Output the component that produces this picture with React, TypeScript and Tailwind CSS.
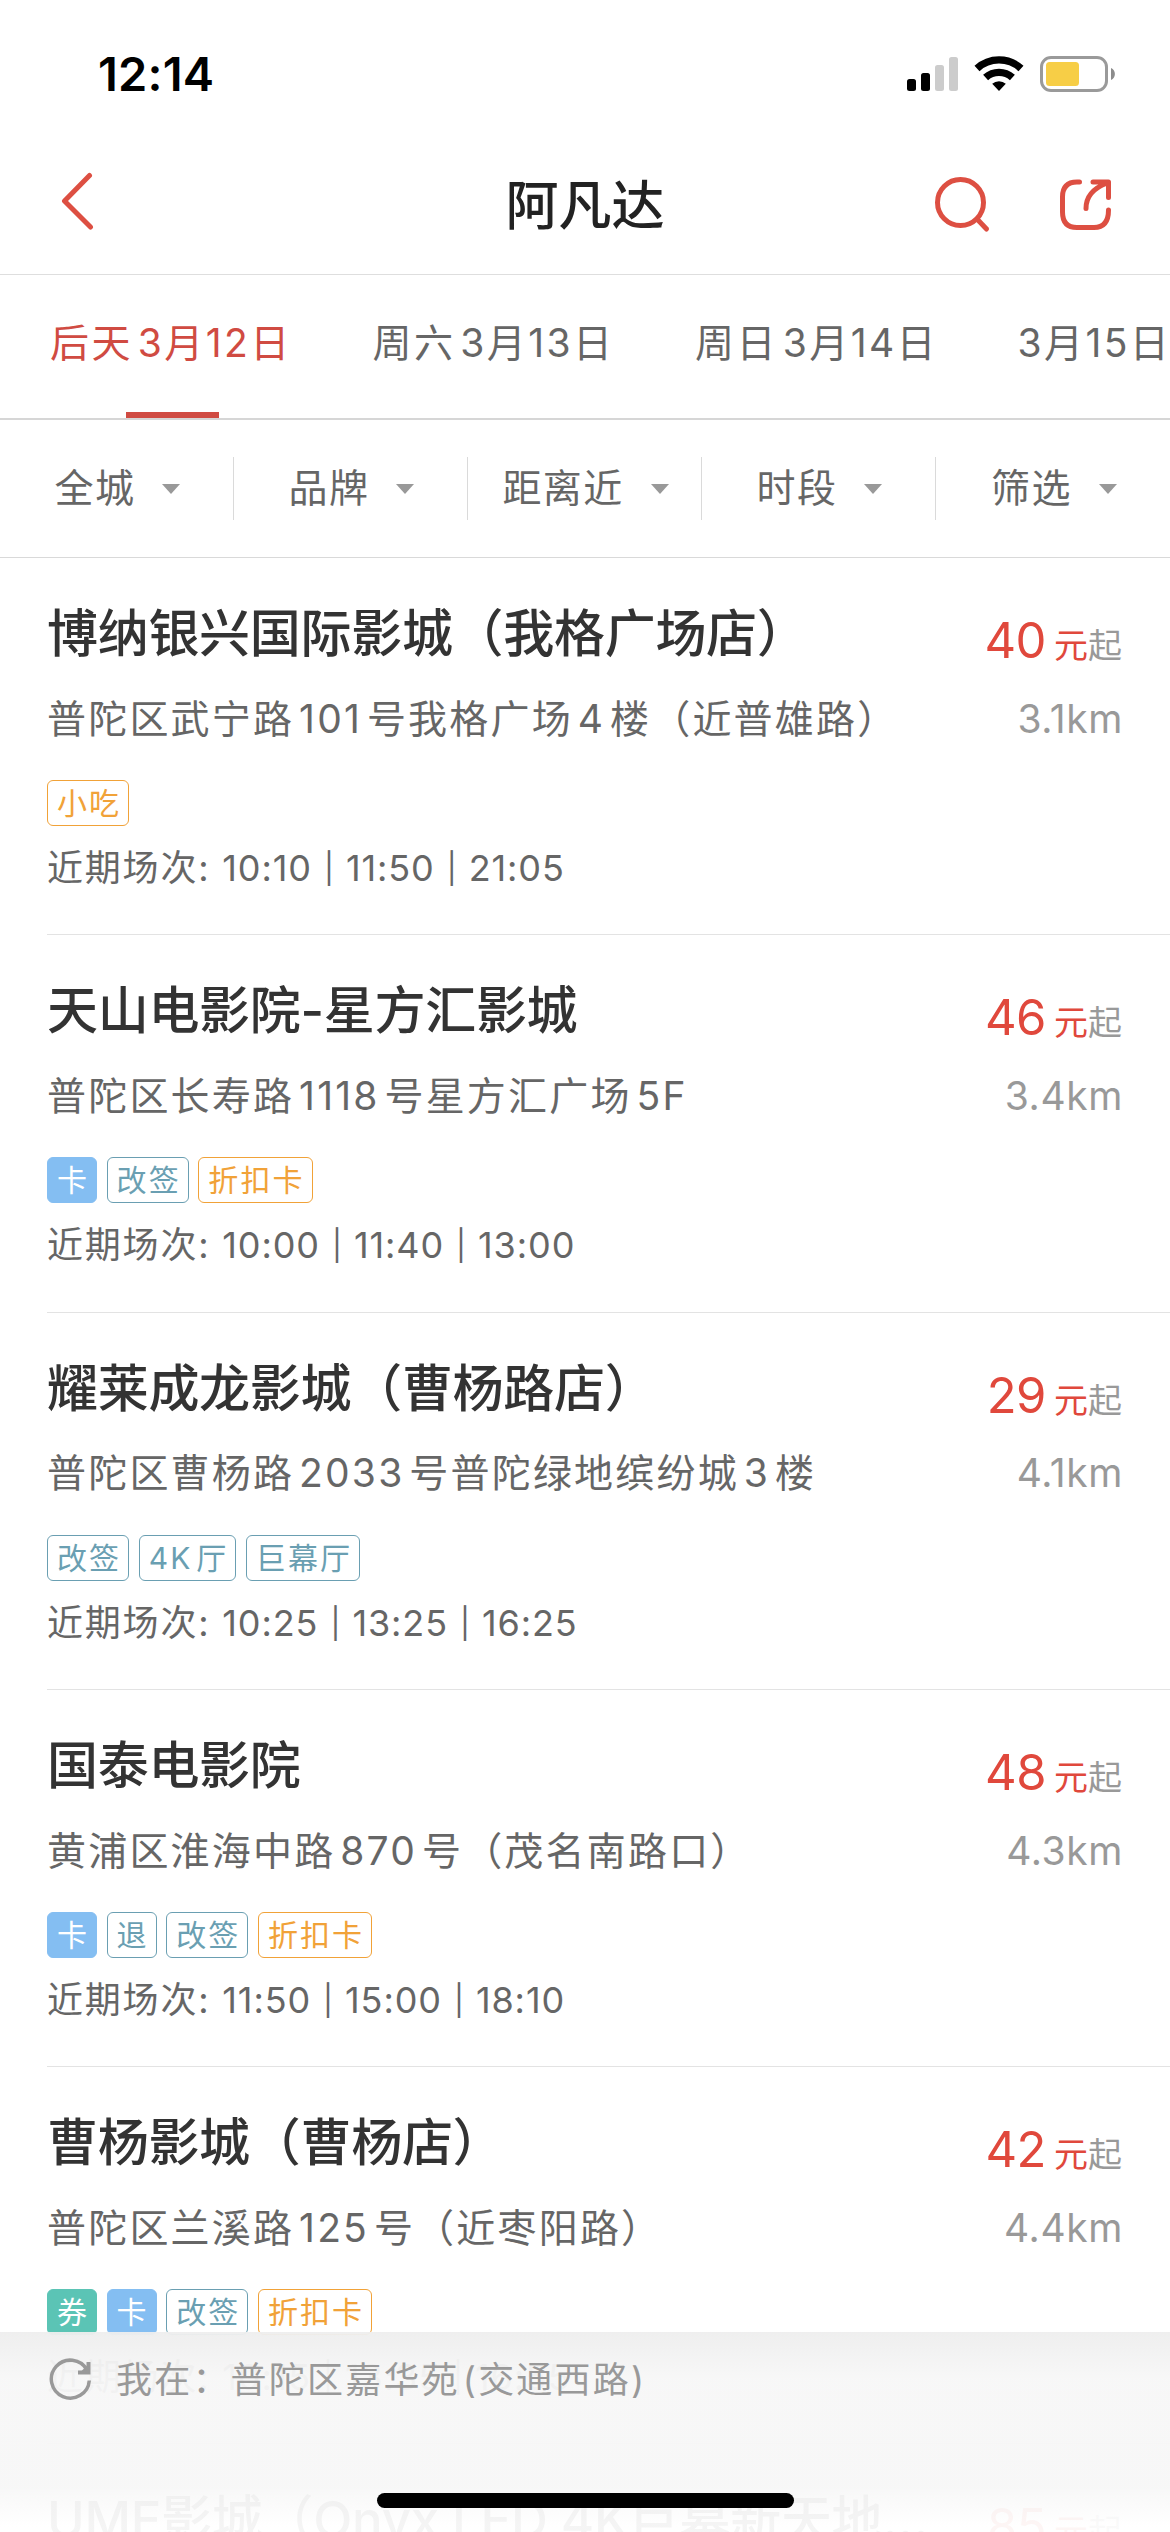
import { Fragment } from 'react';
import clsx from 'clsx';

type TagKind = 'coupon' | 'card' | 'service' | 'promo';

interface Cinema {
  name: string;
  price: number;
  address: string;
  distance: string;
  tags: { label: string; kind: TagKind }[];
  sessions: string[];
}

const dates = [
  { day: '后天', date: '3月12日' },
  { day: '周六', date: '3月13日' },
  { day: '周日', date: '3月14日' },
  { day: '', date: '3月15日' },
];

const filters = ['全城', '品牌', '距离近', '时段', '筛选'];

const cinemas: Cinema[] = [
  {
    name: '博纳银兴国际影城（我格广场店）',
    price: 40,
    address: '普陀区武宁路101号我格广场4楼（近普雄路）',
    distance: '3.1km',
    tags: [{ label: '小吃', kind: 'promo' }],
    sessions: ['10:10', '11:50', '21:05'],
  },
  {
    name: '天山电影院-星方汇影城',
    price: 46,
    address: '普陀区长寿路1118号星方汇广场5F',
    distance: '3.4km',
    tags: [
      { label: '卡', kind: 'card' },
      { label: '改签', kind: 'service' },
      { label: '折扣卡', kind: 'promo' },
    ],
    sessions: ['10:00', '11:40', '13:00'],
  },
  {
    name: '耀莱成龙影城（曹杨路店）',
    price: 29,
    address: '普陀区曹杨路2033号普陀绿地缤纷城3楼',
    distance: '4.1km',
    tags: [
      { label: '改签', kind: 'service' },
      { label: '4K厅', kind: 'service' },
      { label: '巨幕厅', kind: 'service' },
    ],
    sessions: ['10:25', '13:25', '16:25'],
  },
  {
    name: '国泰电影院',
    price: 48,
    address: '黄浦区淮海中路870号（茂名南路口）',
    distance: '4.3km',
    tags: [
      { label: '卡', kind: 'card' },
      { label: '退', kind: 'service' },
      { label: '改签', kind: 'service' },
      { label: '折扣卡', kind: 'promo' },
    ],
    sessions: ['11:50', '15:00', '18:10'],
  },
  {
    name: '曹杨影城（曹杨店）',
    price: 42,
    address: '普陀区兰溪路125号（近枣阳路）',
    distance: '4.4km',
    tags: [
      { label: '券', kind: 'coupon' },
      { label: '卡', kind: 'card' },
      { label: '改签', kind: 'service' },
      { label: '折扣卡', kind: 'promo' },
    ],
    sessions: ['10:15', '13:35', '16:55'],
  },
];

const nextCinema = { name: 'UME影城（Onyx LED 4K巨幕新天地…', price: 85 };

const tagStyles: Record<TagKind, string> = {
  coupon: 'border-[#5bc4b5] bg-[#5bc4b5] text-white',
  card: 'border-[#84bef2] bg-[#84bef2] text-white',
  service: 'border-[#6a9fb2] text-[#6a9fb2]',
  promo: 'border-[#f1a238] text-[#f1a238]',
};

function StatusBar() {
  return (
    <div className="flex h-[132px] shrink-0 items-start justify-between pt-[46px] pr-[54px] pl-[98px]">
      <span className="text-[47px] leading-[56px] font-semibold tracking-[0.2px] text-black">12:14</span>
      <svg width="210" height="38" viewBox="906 55 210 38" className="mt-[9px]">
        <rect x="907" y="79" width="9" height="12" rx="2.5" />
        <rect x="921" y="73" width="9" height="18" rx="2.5" />
        <rect x="935" y="65" width="9" height="26" rx="2.5" fill="#ccc" />
        <rect x="949" y="57" width="9" height="34" rx="2.5" fill="#ccc" />
        <g fill="none" stroke="#000" strokeWidth="7.4">
          <path d="M977 68.5a32.5 32.5 0 0 1 44 0" />
          <path d="M985.6 77.5a20 20 0 0 1 26.8 0" />
        </g>
        <path d="M999 91l-6.8-7.2a10 10 0 0 1 13.6 0z" />
        <rect x="1041.5" y="57.5" width="65" height="33" rx="9.5" fill="none" stroke="#9a9a9a" strokeWidth="3" />
        <rect x="1046" y="62" width="33" height="24" rx="3.5" fill="#f7ce46" />
        <path d="M1111 68c5.2 2.4 5.2 9.6 0 12z" fill="#8c8c8c" />
      </svg>
    </div>
  );
}

function NavBar() {
  return (
    <header className="grid h-[143px] shrink-0 grid-cols-[1fr_auto_1fr] items-center border-b border-[#dedede] px-[58px]">
      <svg width="36" height="60" viewBox="58 170 36 60" fill="none" stroke="#dd4f42" strokeWidth="5" strokeLinecap="round" strokeLinejoin="round" className="-mt-[6px]">
        <path d="M89.5 175.5L64.5 201L90.5 227" />
      </svg>
      <h1 className="pt-[6px] text-[53px] leading-[72px] font-medium text-[#222]">阿凡达</h1>
      <svg width="180" height="56" viewBox="932 178 180 56" fill="none" stroke="#dd4f42" strokeWidth="5" strokeLinecap="round" strokeLinejoin="round" className="mt-[3px] justify-self-end">
        <circle cx="960.5" cy="203.5" r="23" />
        <path d="M977.5 220.5L986.5 230" />
        <path d="M1079.5 183H1077Q1062.5 183 1062.5 198V213Q1062.5 228.5 1077 228.5H1094Q1108.5 228.5 1108.5 211" />
        <path d="M1093 183H1108.5V198.5M1107 184Q1086 192 1086 209.5" />
      </svg>
    </header>
  );
}

function DateTabs() {
  return (
    <div className="flex h-[145px] shrink-0 gap-[77.5px] overflow-hidden border-b-2 border-[#d6d6d6] pl-[50px] [text-autospace:no-autospace]">
      {dates.map(({ day, date }, i) => (
        <div key={date} className="flex w-[245px] shrink-0 flex-col items-center justify-between">
          <span
            className={clsx(
              'w-full pt-[41px] text-[39px] leading-[54px] tracking-[2.4px] whitespace-nowrap',
              i === 0 ? 'text-[#d04b42]' : 'text-[#666]',
            )}
          >
            {day && <span className="mr-[5px]">{day}</span>}
            {date}
          </span>
          {i === 0 && <i className="h-[6px] w-[93px] bg-[#d04b42]" />}
        </div>
      ))}
    </div>
  );
}

function FilterBar() {
  return (
    <div className="grid h-[138px] shrink-0 grid-cols-5 items-center border-b border-[#d9d9d9]">
      {filters.map((label, i) => (
        <div
          key={label}
          className={clsx(
            'flex h-[63px] items-center justify-center gap-[27px] pl-[2px]',
            i < filters.length - 1 && 'border-r border-[#dadada]',
          )}
        >
          <span className="text-[39px] tracking-[1.4px] text-[#666]">{label}</span>
          <svg width="18" height="10" viewBox="0 0 18 10" fill="#999">
            <path d="M0 0h18L9 10z" />
          </svg>
        </div>
      ))}
    </div>
  );
}

function CinemaHeading({ name, price }: { name: string; price: number }) {
  return (
    <div className="flex h-[72px] items-start justify-between [text-autospace:no-autospace]">
      <h2 className="text-[51px] leading-[72px] font-medium tracking-[-0.3px] whitespace-nowrap text-[#333]">{name}</h2>
      <p className="mt-[7px] flex items-baseline leading-[72px] whitespace-nowrap">
        <span className="mr-[8px] text-[49px] tracking-[-0.5px] text-[#e0483c]">{price}</span>
        <span className="text-[34px] text-[#e0483c]">元</span>
        <span className="text-[34px] text-[#999]">起</span>
      </p>
    </div>
  );
}

function CinemaRow({ cinema }: { cinema: Cinema }) {
  return (
    <li className="ml-[47px] flex h-[377.3px] shrink-0 flex-col border-b border-[#e3e3e3] pt-[40px] pr-[48px]">
      <CinemaHeading name={cinema.name} price={cinema.price} />
      <div className="mt-[19px] flex h-[60px] items-center justify-between">
        <p className="text-[39px] tracking-[2.2px] whitespace-nowrap text-[#666]">{cinema.address}</p>
        <p className="-mr-[1px] text-[39px] tracking-[0.6px] text-[#999]">{cinema.distance}</p>
      </div>
      <div className="mt-[31px] flex h-[46px] gap-[9.5px]">
        {cinema.tags.map((tag) => (
          <span
            key={tag.label}
            className={clsx(
              'flex h-[46px] items-center rounded-[6px] border pr-[7px] pl-[9px] text-[30px] leading-none tracking-[2.1px]',
              tagStyles[tag.kind],
            )}
          >
            {tag.label}
          </span>
        ))}
      </div>
      <p className="mt-[15px] text-[36px] leading-[54px] whitespace-nowrap text-[#666]">
        <span className="tracking-[1.8px]">近期场次: </span>
        {cinema.sessions.map((time, i) => (
          <Fragment key={time}>
            {i > 0 && <span className="mx-[11px] inline-block w-[12px] text-center align-[2px] text-[30px] leading-none">|</span>}
            <span className="tracking-[0.9px]">{time}</span>
          </Fragment>
        ))}
      </p>
    </li>
  );
}

function LocationBar() {
  return (
    <div className="absolute inset-x-0 bottom-0 h-[200px] bg-linear-[180deg,rgba(238,238,238,0.96)_0px,rgba(247,247,247,0.96)_46px,rgba(247,247,247,0.96)_155px,rgba(255,255,255,0.95)_195px]">
      <div className="flex h-[96px] items-center gap-[23px] pl-[49px] text-[#999]">
        <svg width="44" height="44" viewBox="0 0 44 44" fill="none" stroke="currentColor" strokeWidth="3.5">
          <path d="M38 12A19 19 0 1 0 40.3 22.5" />
          <path d="M39.5 4V14.5H29" strokeWidth="4" />
          <path d="M31 14.5H39.5V6z" fill="currentColor" stroke="none" />
        </svg>
        <span className="text-[36px] tracking-[2.2px]">我在：普陀区嘉华苑<span className="ml-[3px]">(交通西路)</span></span>
      </div>
      <div className="mx-auto mt-[65px] h-[15px] w-[417px] rounded-full bg-black" />
    </div>
  );
}

export default function App() {
  return (
    <div className="relative flex h-[2532px] w-[1170px] flex-col overflow-hidden bg-white font-['Inter','Noto_Sans_CJK_SC',sans-serif] [text-autospace:normal]">
      <StatusBar />
      <NavBar />
      <DateTabs />
      <FilterBar />
      <ul className="flex shrink-0 flex-col">
        {cinemas.map((cinema) => (
          <CinemaRow key={cinema.name} cinema={cinema} />
        ))}
        <li className="ml-[47px] pt-[40px] pr-[48px]">
          <CinemaHeading name={nextCinema.name} price={nextCinema.price} />
        </li>
      </ul>
      <LocationBar />
    </div>
  );
}
